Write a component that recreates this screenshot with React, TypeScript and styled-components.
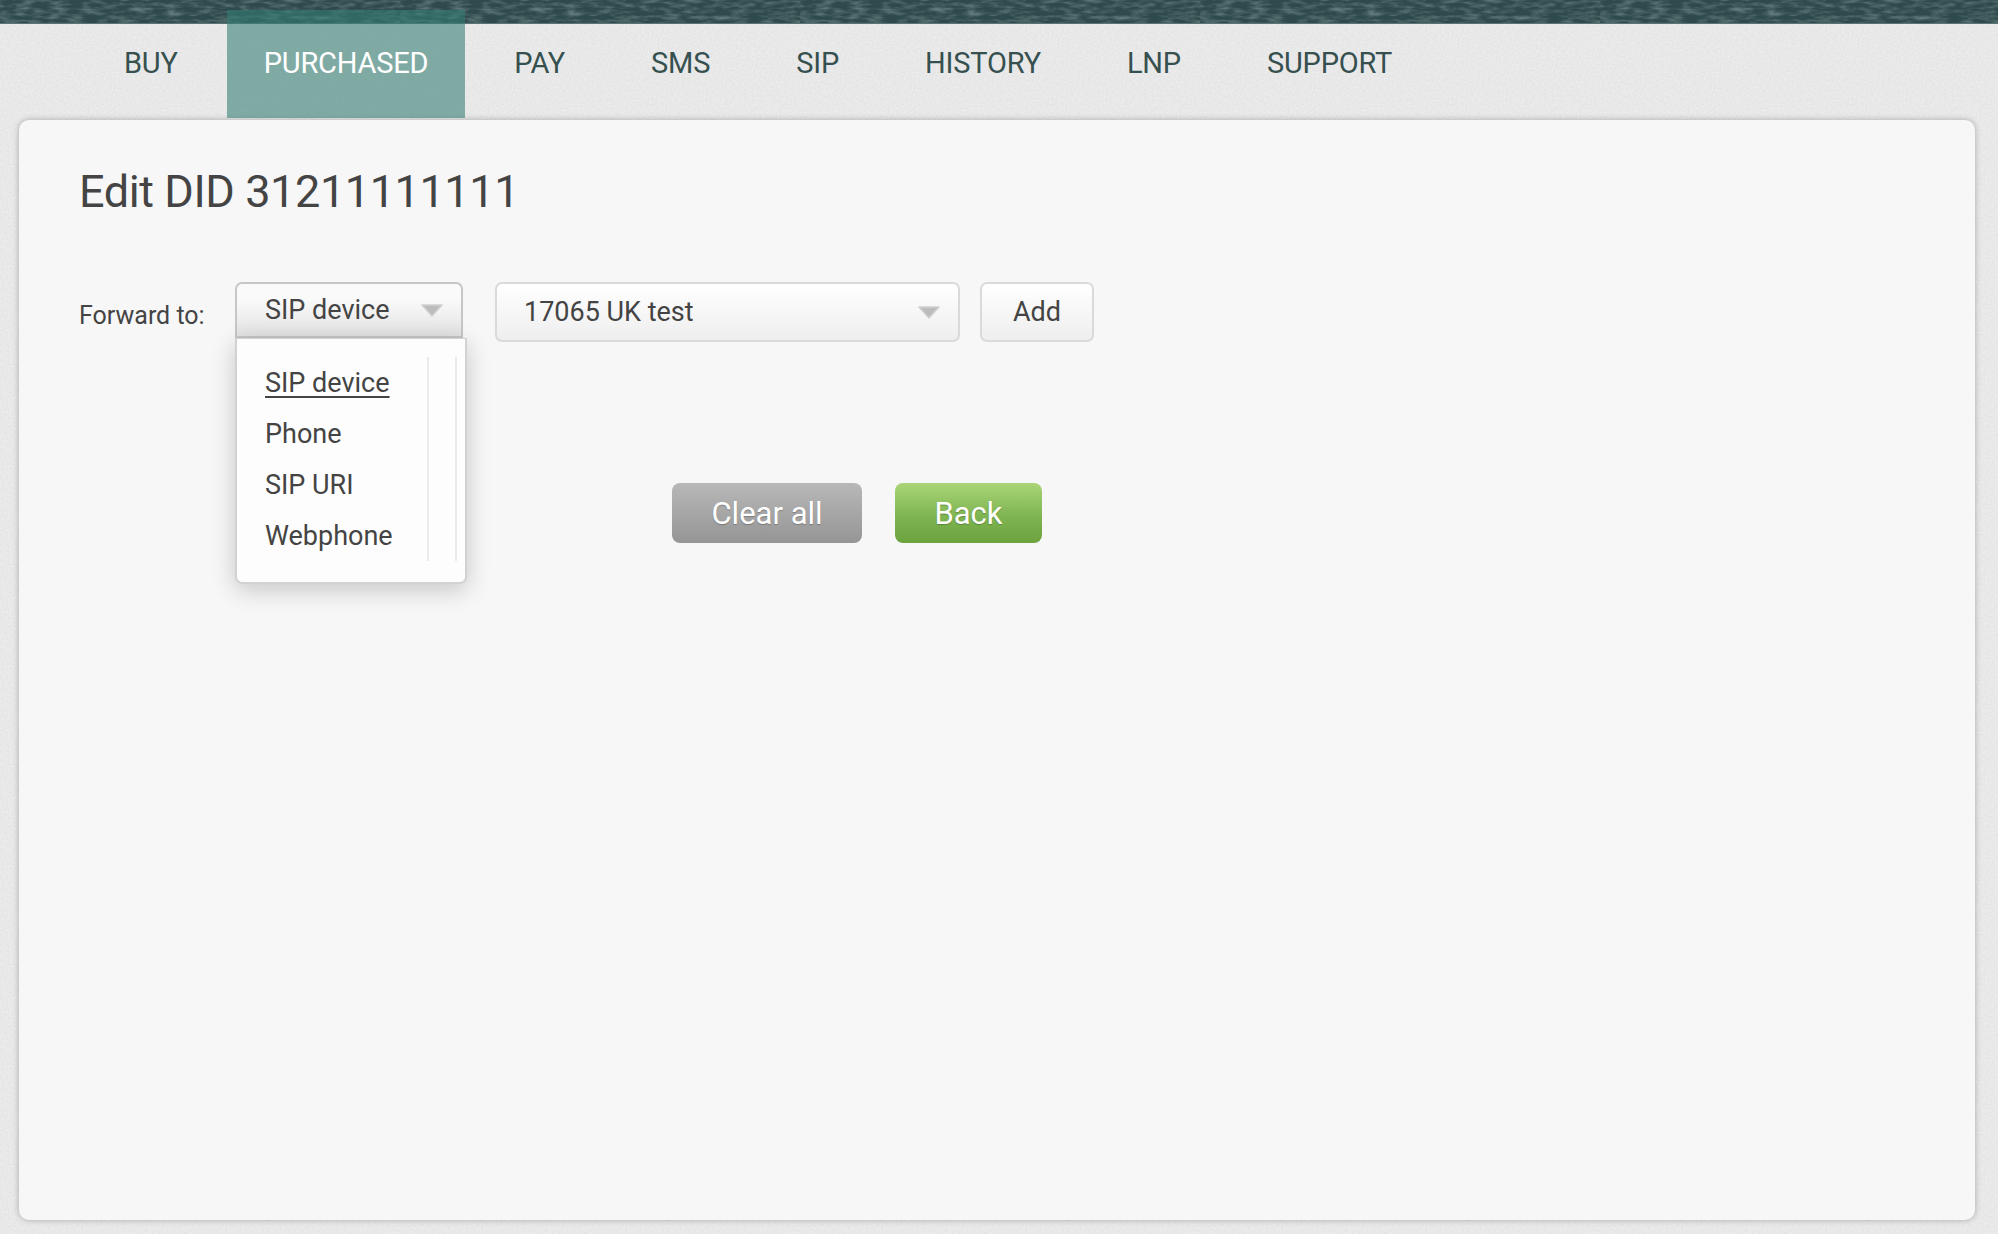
import React from 'react';
import styled, { createGlobalStyle } from 'styled-components';

const noise = (freq: string, matrix: string) =>
  `url("data:image/svg+xml,${encodeURIComponent(
    `<svg xmlns='http://www.w3.org/2000/svg' width='400' height='200'><filter id='n'><feTurbulence type='fractalNoise' baseFrequency='${freq}' numOctaves='3' stitchTiles='stitch'/><feColorMatrix values='${matrix}'/></filter><rect width='400' height='200' filter='url(#n)'/></svg>`
  )}")`;

const paperNoise = noise('0.5', '0 0 0 0 0.5 0 0 0 0 0.5 0 0 0 0 0.5 0 0 0 0.35 -0.1');
const slateNoise = noise('0.06 0.25', '0 0 0 0 0.6 0 0 0 0 0.75 0 0 0 0 0.75 0 0 0 0.7 -0.28');

const GlobalStyle = createGlobalStyle`
  html, body {
    margin: 0;
    height: 100%;
  }
  body {
    font-family: Roboto, "Liberation Sans", sans-serif;
    color: #444;
    background-color: #ececec;
    background-image: ${paperNoise};
  }
`;

const Page = styled.div`
  height: 1234px;
  overflow: hidden;
  display: flex;
  flex-direction: column;
`;

const TopBand = styled.div`
  height: 23px;
  flex: none;
  background-color: #2f4a4c;
  background-image: ${slateNoise};
  border-bottom: 1px solid #5d7273;
`;

const Nav = styled.nav`
  display: flex;
  gap: 12px;
  margin: -14px 0 0 87px;
  height: 108px;
  position: relative;
`;

const NavItem = styled.a<{ $active?: boolean }>`
  padding: 0 37px;
  height: 108px;
  box-sizing: border-box;
  padding-top: 31px;
  line-height: 44px;
  font-size: 29px;
  letter-spacing: -0.2px;
  color: ${(p) => (p.$active ? '#fff' : '#36504f')};
  background: ${(p) => (p.$active ? 'rgba(52, 125, 115, 0.58)' : 'transparent')};
`;

const Panel = styled.main`
  margin: 2px 23px 0 19px;
  height: 1100px;
  box-sizing: border-box;
  padding: 44px 60px;
  background: #f7f7f7;
  border-radius: 10px;
  box-shadow: 0 0 6px rgba(0, 0, 0, 0.28);
`;

const Title = styled.h1`
  margin: 0;
  font-size: 45px;
  line-height: 56px;
  font-weight: 400;
  letter-spacing: -0.4px;
  color: #444;
`;

const FormRow = styled.div`
  display: flex;
  align-items: flex-start;
  margin-top: 62px;
`;

const FieldLabel = styled.label`
  width: 156px;
  font-size: 25px;
  line-height: 30px;
  padding-top: 19px;
  color: #444;
`;

const SelectBox = styled.div<{ $open?: boolean; $width: number }>`
  position: relative;
  box-sizing: border-box;
  width: ${(p) => p.$width}px;
  height: ${(p) => (p.$open ? 56 : 60)}px;
  padding-left: ${(p) => (p.$open ? 28 : 27)}px;
  display: flex;
  align-items: center;
  font-size: 27px;
  color: #444;
  border: 2px solid ${(p) => (p.$open ? '#c6c6c6' : '#dadada')};
  border-radius: ${(p) => (p.$open ? '7px 7px 0 0' : '7px')};
  background: ${(p) =>
    p.$open
      ? 'linear-gradient(#fafafa 30%, #e2e2e2)'
      : 'linear-gradient(#ffffff, #eeeeee)'};
`;

const Caret = styled.svg<{ $right: number }>`
  position: absolute;
  right: ${(p) => p.$right}px;
  top: 50%;
  margin-top: -7px;
`;

const Menu = styled.div`
  position: absolute;
  top: 54px;
  left: -2px;
  width: 232px;
  height: 246px;
  box-sizing: border-box;
  padding-top: 19px;
  background: #fdfdfd;
  border: 2px solid #d2d2d2;
  border-top-width: 1px;
  border-radius: 0 0 7px 7px;
  box-shadow: 0 6px 24px rgba(0, 0, 0, 0.2);
  z-index: 2;
`;

const MenuItem = styled.div<{ $current?: boolean }>`
  height: 51px;
  line-height: 51px;
  padding-left: 28px;
  font-size: 27px;
  color: #444;
  text-decoration: ${(p) => (p.$current ? 'underline' : 'none')};
  text-underline-offset: 4px;
`;

const MenuTrack = styled.div`
  position: absolute;
  top: 18px;
  left: 190px;
  width: 26px;
  height: 204px;
  border-left: 2px solid #ebebeb;
  border-right: 2px solid #ebebeb;
`;

const AddButton = styled.button`
  box-sizing: border-box;
  width: 114px;
  height: 60px;
  margin-left: 20px;
  font: inherit;
  font-size: 27px;
  color: #444;
  border: 2px solid #dadada;
  border-radius: 7px;
  background: linear-gradient(#ffffff, #eeeeee);
`;

const ActionRow = styled.div`
  display: flex;
  gap: 33px;
  margin: 141px 0 0 593px;
`;

const ActionButton = styled.button<{ $tone: 'grey' | 'green'; $width: number }>`
  width: ${(p) => p.$width}px;
  height: 60px;
  border: none;
  border-radius: 8px;
  font: inherit;
  font-size: 31px;
  color: #fff;
  text-shadow: 0 1px 1px rgba(0, 0, 0, 0.25);
  background: ${(p) =>
    p.$tone === 'grey'
      ? 'linear-gradient(#b8b8b8, #959595)'
      : 'linear-gradient(#aad577 0%, #7fb552 55%, #6ca33d 100%)'};
`;

const SelectCaret = ({ right }: { right: number }) => (
  <Caret $right={right} width="22" height="14" viewBox="0 0 22 14">
    <path d="M1 2h20l-10 11z" fill="#bcbcbc" stroke="#cfcfcf" strokeWidth="1.5" strokeLinejoin="round" />
  </Caret>
);

const navItems = ['BUY', 'PURCHASED', 'PAY', 'SMS', 'SIP', 'HISTORY', 'LNP', 'SUPPORT'];
const forwardOptions = ['SIP device', 'Phone', 'SIP URI', 'Webphone'];

export default function App() {
  return (
    <Page>
      <GlobalStyle />
      <TopBand />
      <Nav>
        {navItems.map((item) => (
          <NavItem key={item} $active={item === 'PURCHASED'}>
            {item}
          </NavItem>
        ))}
      </Nav>
      <Panel>
        <Title>Edit DID 31211111111</Title>
        <FormRow>
          <FieldLabel>Forward to:</FieldLabel>
          <SelectBox $open $width={228}>
            SIP device
            <SelectCaret right={18} />
            <Menu>
              {forwardOptions.map((option) => (
                <MenuItem key={option} $current={option === 'SIP device'}>
                  {option}
                </MenuItem>
              ))}
              <MenuTrack />
            </Menu>
          </SelectBox>
          <SelectBox $width={465} style={{ marginLeft: 32 }}>
            17065 UK test
            <SelectCaret right={18} />
          </SelectBox>
          <AddButton>Add</AddButton>
        </FormRow>
        <ActionRow>
          <ActionButton $tone="grey" $width={190}>
            Clear all
          </ActionButton>
          <ActionButton $tone="green" $width={147}>
            Back
          </ActionButton>
        </ActionRow>
      </Panel>
    </Page>
  );
}
